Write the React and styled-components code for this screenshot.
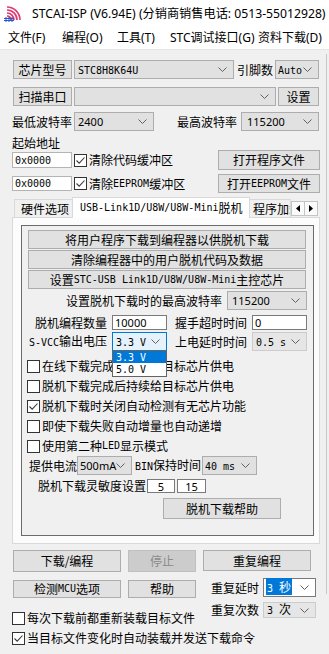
import React from 'react';
import styled, { createGlobalStyle, css } from 'styled-components';

const GlobalStyle = createGlobalStyle`
  html, body {
    margin: 0;
    padding: 0;
    background: #f0f0f0;
  }
  body {
    font-family: "Noto Sans CJK SC", "Noto Sans", sans-serif;
    font-size: 12px;
    color: #000;
  }
  * { box-sizing: border-box; }
`;

const Window = styled.div`
  width: 329px;
  height: 654px;
  overflow: hidden;
  display: flex;
  flex-direction: column;
  background: #f0f0f0;
`;

const TitleBar = styled.div`
  height: 27px;
  flex: none;
  background: #fff;
  display: flex;
  align-items: center;
  padding-left: 4px;
  white-space: nowrap;
  overflow: hidden;
  font-family: "Noto Sans", "Noto Sans CJK SC", sans-serif;
  font-size: 12.2px;
`;

const IconSvg = styled.svg`
  flex: none;
  display: block;
`;

const TitleText = styled.span`
  margin-left: 10px;
  line-height: 16px;
`;

const MenuBar = styled.div`
  height: 22px;
  flex: none;
  background: #fff;
  display: flex;
  align-items: center;
  padding-left: 8px;
  white-space: nowrap;
  overflow: hidden;
`;

const MenuItem = styled.span`
  flex: none;
  width: ${p => (p.$w ? `${p.$w}px` : 'auto')};
  line-height: 16px;
  font-family: "Noto Sans", "Noto Sans CJK SC", sans-serif;
  font-size: 12px;
`;

const Body = styled.div`
  flex: 1;
  display: flex;
  min-height: 0;
  border-top: 1px solid #e6e6e6;
`;

const Main = styled.div`
  width: 326px;
  flex: none;
  padding: 10px 6px 0 12px;
  display: flex;
  flex-direction: column;
`;

const SidePeek = styled.div`
  flex: 1;
  height: 540px;
  margin-top: 4px;
  border-left: 1px solid #c8c8c8;
`;

const Row = styled.div`
  display: flex;
  align-items: ${p => p.$align || 'center'};
  justify-content: ${p => p.$justify || 'flex-start'};
  height: ${p => p.$h || 19}px;
  margin-top: ${p => p.$mt || 0}px;
  padding-left: ${p => p.$pl || 0}px;
  padding-right: ${p => p.$pr || 0}px;
  flex: none;
`;

const Mono = styled.span`
  font-family: "DejaVu Sans Mono", "Liberation Mono", monospace;
  font-size: 10px;
`;

const Num = styled.span`
  font-family: "Noto Sans", "Liberation Sans", sans-serif;
  font-size: 11px;
`;

const Label = styled.span`
  flex: none;
  width: ${p => (p.$w ? `${p.$w}px` : 'auto')};
  margin-left: ${p => p.$ml || 0}px;
  text-align: ${p => p.$align || 'left'};
  white-space: nowrap;
  line-height: 14px;
`;

const Btn = styled.button`
  flex: none;
  width: ${p => p.$w}px;
  height: ${p => p.$h || 19}px;
  margin-left: ${p => (p.$auto ? 'auto' : `${p.$ml || 0}px`)};
  padding: 0;
  border: 1px solid #adadad;
  background: #e1e1e1;
  color: #000;
  font: inherit;
  font-size: 12px;
  line-height: 14px;
  display: flex;
  align-items: center;
  justify-content: center;
  white-space: nowrap;

  &:disabled {
    background: #cccccc;
    border-color: #bfbfbf;
    color: #8a8a8a;
  }
`;

const comboVariants = {
  normal: css`
    background: #e1e1e1;
    border-color: #adadad;
  `,
  dim: css`
    background: #e6e6e6;
    border-color: #cccccc;
  `,
  edit: css`
    background: #fff;
    border-color: #7a7a7a;
  `,
  open: css`
    background: #e5f1fb;
    border-color: #0078d7;
  `,
};

const ComboBox = styled.div`
  position: relative;
  flex: none;
  width: ${p => p.$w}px;
  height: ${p => p.$h || 19}px;
  margin-left: ${p => p.$ml || 0}px;
  display: flex;
  align-items: center;
  padding-left: ${p => p.$pad ?? 3}px;
  border: 1px solid;
  white-space: nowrap;
  ${p => comboVariants[p.$variant || 'normal']}
`;

const ComboValue = styled.span`
  flex: 1;
  min-width: 0;
  line-height: 14px;
`;

const Selected = styled.span`
  background: #0078d7;
  color: #fff;
  padding: 0 1px;
`;

const Chevron = styled.svg`
  flex: none;
  margin-right: 6px;
  display: block;
`;

const DropList = styled.div`
  position: absolute;
  top: 100%;
  left: -1px;
  right: -1px;
  background: #fff;
  border: 1px solid #646464;
  z-index: 5;
`;

const DropOption = styled.div`
  height: ${p => p.$h || 12}px;
  padding-left: 3px;
  display: flex;
  align-items: center;
  background: ${p => (p.$selected ? '#0078d7' : '#fff')};
  color: ${p => (p.$selected ? '#fff' : '#000')};
`;

const TextBox = styled.div`
  flex: none;
  width: ${p => p.$w}px;
  height: ${p => p.$h || 15}px;
  margin-left: ${p => p.$ml || 0}px;
  background: #fff;
  border: 1px solid ${p => (p.$light ? '#b4b4b4' : '#7a7a7a')};
  display: flex;
  align-items: center;
  justify-content: ${p => (p.$center ? 'center' : 'flex-start')};
  padding-left: ${p => (p.$center ? 0 : 2)}px;
  line-height: 13px;
  white-space: nowrap;
`;

const CheckRow = styled.label`
  display: flex;
  align-items: center;
  flex: none;
  height: ${p => p.$h || 20}px;
  margin-top: ${p => p.$mt || 0}px;
  margin-left: ${p => p.$ml || 0}px;
  white-space: nowrap;
  line-height: 14px;
`;

const Box = styled.span`
  flex: none;
  width: 13px;
  height: 13px;
  margin-right: 2px;
  border: 1px solid #333;
  background: #fff;
  display: flex;
  align-items: center;
  justify-content: center;
`;

const StartLabel = styled.div`
  height: 14px;
  margin-top: 5px;
  line-height: 14px;
  flex: none;
`;

const TabStrip = styled.div`
  position: relative;
  z-index: 1;
  display: flex;
  align-items: flex-end;
  height: 21px;
  margin-top: 4px;
  margin-bottom: -1px;
  flex: none;
  width: 308px;
`;

const Tab = styled.div`
  flex: none;
  width: ${p => p.$w}px;
  height: ${p => (p.$active ? 21 : 19)}px;
  margin-left: ${p => p.$ml || 0}px;
  padding-left: ${p => p.$pl || 6}px;
  border: 1px solid #d9d9d9;
  border-bottom: ${p => (p.$active ? 'none' : '1px solid #d9d9d9')};
  background: ${p => (p.$active ? '#fff' : '#f0f0f0')};
  display: flex;
  align-items: center;
  white-space: nowrap;
  overflow: hidden;
  line-height: 14px;
  z-index: ${p => (p.$active ? 2 : 1)};
`;

const TabScroll = styled.div`
  align-self: flex-start;
  margin-top: 4px;
  display: flex;
  flex: none;
`;

const ScrollBtn = styled.div`
  width: 14px;
  height: 15px;
  border: 1px solid #c4c4c4;
  background: #fafafa;
  display: flex;
  align-items: center;
  justify-content: center;
  & + & {
    margin-left: -1px;
  }
`;

const TabPage = styled.div`
  width: 308px;
  height: 327px;
  flex: none;
  border: 1px solid #d9d9d9;
  background: #fcfcfc;
  padding: 7px 5px 7px 8px;
  display: flex;
`;

const GroupBox = styled.div`
  flex: 1;
  border: 1px solid #6b6b6b;
  background: #f0f0f0;
  display: flex;
  flex-direction: column;
  padding-top: 4px;
`;

const BottomBlock = styled.div`
  display: flex;
  align-items: flex-start;
  margin-top: 6px;
  flex: none;
`;

const Column = styled.div`
  display: flex;
  flex-direction: column;
  flex: none;
  width: ${p => (p.$w ? `${p.$w}px` : 'auto')};
`;

const ArrowDown = () => (
  <Chevron width="9" height="5" viewBox="0 0 9 5">
    <path d="M0.5 0.5L4.5 4.5L8.5 0.5" fill="none" stroke="#606060" strokeWidth="1" />
  </Chevron>
);

const Combo = ({ children, open, options, ...props }) => (
  <ComboBox $variant={open ? 'open' : props.$variant} {...props}>
    <ComboValue>{children}</ComboValue>
    <ArrowDown />
    {open && (
      <DropList>
        {options.map((o, i) => (
          <DropOption key={i} $selected={i === 0} $h={i === 0 ? 12 : 13}>
            <Mono>{o}</Mono>
          </DropOption>
        ))}
      </DropList>
    )}
  </ComboBox>
);

const Check = ({ checked, children, ...props }) => (
  <CheckRow {...props}>
    <Box>
      {checked && (
        <svg width="11" height="11" viewBox="0 0 11 11">
          <path d="M1.5 5.5L4.2 8.2L9.5 2.5" fill="none" stroke="#3a3a3a" strokeWidth="1.1" />
        </svg>
      )}
    </Box>
    {children}
  </CheckRow>
);

const AppIcon = () => (
  <IconSvg width="18" height="16" viewBox="0 0 18 16">
    {[4, 7, 10, 13].map(r => (
      <path
        key={r}
        d={`M3 ${14 - r}A${r} ${r} 0 0 1 ${3 + r} 14`}
        fill="none"
        stroke="#e03a72"
        strokeWidth="1.7"
      />
    ))}
    <path d="M0 12.5h10M0 14.5h10M2 11v5M5 11v5M8 11v5" stroke="#2a56cc" strokeWidth="1" />
  </IconSvg>
);

const Triangle = ({ dir }) => (
  <svg width="4" height="7" viewBox="0 0 4 7">
    <path d={dir === 'left' ? 'M4 0L0 3.5L4 7Z' : 'M0 0L4 3.5L0 7Z'} fill="#000" />
  </svg>
);

export default function App() {
  return (
    <Window>
      <GlobalStyle />
      <TitleBar>
        <AppIcon />
        <TitleText>STCAI-ISP (V6.94E) (分销商销售电话: 0513-55012928)</TitleText>
      </TitleBar>
      <MenuBar>
        <MenuItem $w={54}>文件(F)</MenuItem>
        <MenuItem $w={55}>编程(O)</MenuItem>
        <MenuItem $w={53}>工具(T)</MenuItem>
        <MenuItem $w={88}>STC调试接口(G)</MenuItem>
        <MenuItem>资料下载(D)</MenuItem>
      </MenuBar>

      <Body>
        <Main>
          <Row>
            <Btn $w={59} $ml={1}>芯片型号</Btn>
            <Combo $w={160} $ml={2}><Mono>STC8H8K64U</Mono></Combo>
            <Label $w={36} $ml={3}>引脚数</Label>
            <Combo $w={44} $ml={2} $pad={2}><Mono>Auto</Mono></Combo>
          </Row>
          <Row $mt={8}>
            <Btn $w={59} $ml={1}>扫描串口</Btn>
            <Combo $w={202} $ml={2} />
            <Btn $w={41} $ml={2}>设置</Btn>
          </Row>
          <Row $mt={6}>
            <Label $w={60}>最低波特率</Label>
            <Combo $w={80} $ml={2}><Num>2400</Num></Combo>
            <Label $w={60} $ml={23}>最高波特率</Label>
            <Combo $w={78} $ml={4} $pad={5}><Num>115200</Num></Combo>
          </Row>

          <StartLabel>起始地址</StartLabel>
          <Row $h={20}>
            <TextBox $w={60} $h={16} $light><Mono>0x0000</Mono></TextBox>
            <Check $ml={2} $h={20} checked>清除代码缓冲区</Check>
            <Btn $w={102} $h={20} $auto>打开程序文件</Btn>
          </Row>
          <Row $mt={4}>
            <TextBox $w={60} $h={15} $light><Mono>0x0000</Mono></TextBox>
            <Check $ml={2} $h={19} checked>清除<Mono>EEPROM</Mono>缓冲区</Check>
            <Btn $w={102} $auto>打开<Mono>EEPROM</Mono>文件</Btn>
          </Row>

          <TabStrip>
            <Tab $w={59} $ml={2}>硬件选项</Tab>
            <Tab $w={178} $ml={-1} $pl={7} $active>
              <Mono>USB-Link1D/U8W/U8W-Mini</Mono>脱机
            </Tab>
            <Tab $w={42} $ml={-1} $pl={3}>程序加载</Tab>
            <TabScroll>
              <ScrollBtn><Triangle dir="left" /></ScrollBtn>
              <ScrollBtn><Triangle dir="right" /></ScrollBtn>
            </TabScroll>
          </TabStrip>

          <TabPage>
            <GroupBox>
              <Row $pl={6}>
                <Btn $w={278}>将用户程序下载到编程器以供脱机下载</Btn>
              </Row>
              <Row $pl={6} $mt={1}>
                <Btn $w={278}>清除编程器中的用户脱机代码及数据</Btn>
              </Row>
              <Row $pl={6} $mt={1}>
                <Btn $w={278}>设置<Mono>STC-USB Link1D/U8W/U8W-Mini</Mono>主控芯片</Btn>
              </Row>
              <Row $mt={2} $justify="flex-end" $pr={6}>
                <Label>设置脱机下载时的最高波特率</Label>
                <Combo $w={80} $ml={5} $pad={4}><Num>115200</Num></Combo>
              </Row>
              <Row $mt={5} $h={15} $pl={6}>
                <Label $w={79} $align="right">脱机编程数量</Label>
                <TextBox $w={55} $ml={5} $h={15}><Num>10000</Num></TextBox>
                <Label $w={72} $ml={8}>握手超时时间</Label>
                <TextBox $w={55} $ml={5} $h={15}><Num>0</Num></TextBox>
              </Row>
              <Row $mt={2} $pl={6}>
                <Label $w={79} $align="right"><Mono>S-VCC</Mono>输出电压</Label>
                <Combo $w={55} $ml={5} open options={['3.3 V', '5.0 V']}><Mono>3.3 V</Mono></Combo>
                <Label $w={72} $ml={8}>上电延时时间</Label>
                <Combo $w={55} $ml={5} $variant="dim"><Mono>0.5 s</Mono></Combo>
              </Row>
              <Check $mt={5} $ml={5}>在线下载完成后持续给目标芯片供电</Check>
              <Check $ml={5}>脱机下载完成后持续给目标芯片供电</Check>
              <Check $ml={5} checked>脱机下载时关闭自动检测有无芯片功能</Check>
              <Check $ml={5}>即使下载失败自动增量也自动递增</Check>
              <Check $ml={5}>使用第二种<Mono>LED</Mono>显示模式</Check>
              <Row $pl={7}>
                <Label $w={48}>提供电流</Label>
                <Combo $w={55} $pad={2}><Num>500mA</Num></Combo>
                <Label $ml={3} $w={66}><Mono>BIN</Mono>保持时间</Label>
                <Combo $w={55} $ml={1} $pad={2}><Mono>40 ms</Mono></Combo>
              </Row>
              <Row $mt={4} $h={14} $pl={16}>
                <Label $w={108}>脱机下载灵敏度设置</Label>
                <TextBox $w={28} $ml={1} $h={14} $center><Num>5</Num></TextBox>
                <TextBox $w={29} $ml={2} $h={14} $center><Num>15</Num></TextBox>
              </Row>
              <Row $mt={5} $h={21} $pl={141}>
                <Btn $w={118} $h={21}>脱机下载帮助</Btn>
              </Row>
            </GroupBox>
          </TabPage>

          <Row $mt={6} $h={22} $align="flex-start">
            <Btn $w={108} $h={22} $ml={1}>下载/编程</Btn>
            <Btn $w={68} $h={22} $ml={7} disabled>停止</Btn>
            <Btn $w={108} $h={21} $ml={7}>重复编程</Btn>
          </Row>

          <BottomBlock>
            <Column $w={199}>
              <Row $mt={2} $h={18}>
                <Btn $w={108} $h={18} $ml={1}>检测<Mono>MCU</Mono>选项</Btn>
                <Btn $w={68} $h={18} $ml={7}>帮助</Btn>
              </Row>
              <Check $mt={13} $h={14}>每次下载前都重新装载目标文件</Check>
            </Column>
            <Column>
              <Row>
                <Label $w={48}>重复延时</Label>
                <Combo $w={53} $ml={4} $variant="edit" $pad={2}>
                  <Selected><Mono>3 </Mono>秒</Selected>
                </Combo>
              </Row>
              <Row $mt={5} $h={16}>
                <Label $w={48}>重复次数</Label>
                <Combo $w={53} $ml={4} $h={16} $variant="dim"><Mono>3 </Mono>次</Combo>
              </Row>
            </Column>
          </BottomBlock>
          <Check $mt={6} $h={14} checked>当目标文件变化时自动装载并发送下载命令</Check>
        </Main>
        <SidePeek />
      </Body>
    </Window>
  );
}
